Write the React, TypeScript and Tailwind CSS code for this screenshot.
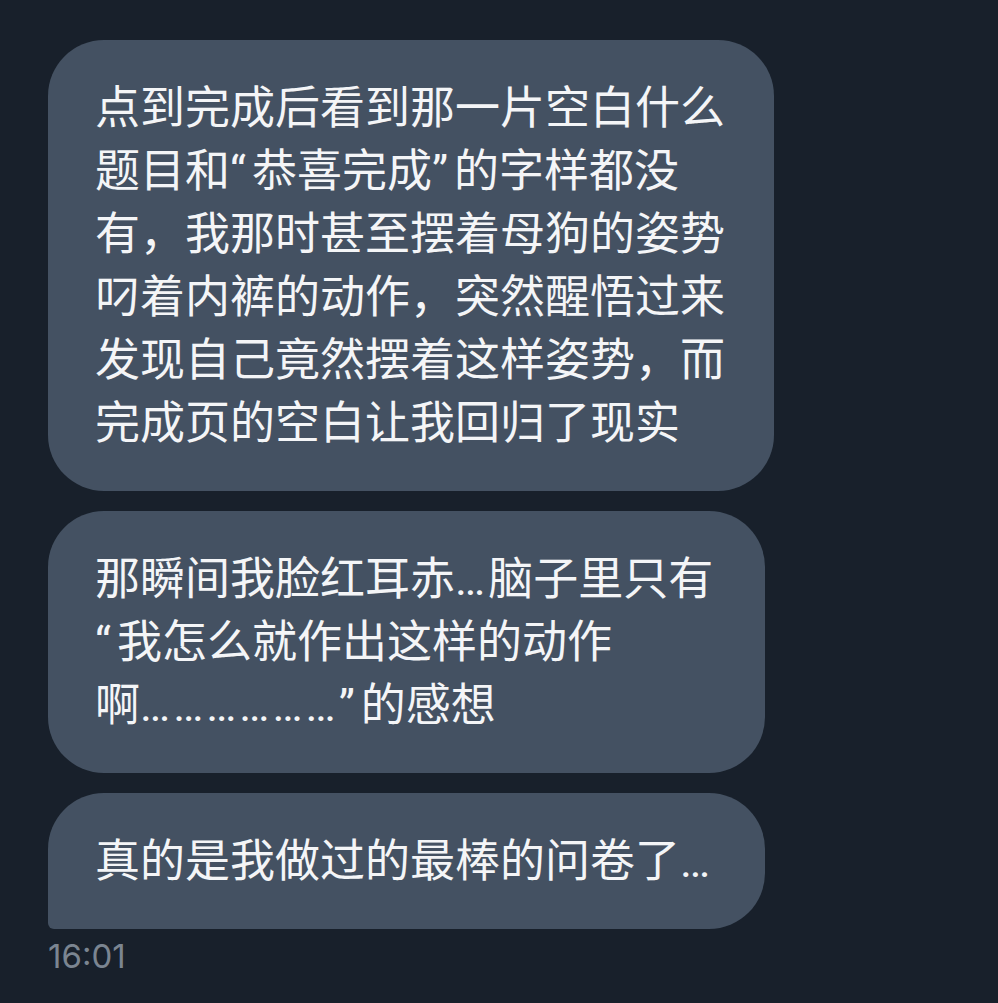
import React from 'react';

// narrow Latin ellipsis and curly quotes, spaced like the phone font
const E = () => <span className="tracking-[3px]">…</span>;
const Q = ({ c }: { c: string }) => <span className="tracking-[6px]">{c}</span>;

const bubbles: { lines: React.ReactNode[]; width: string; corner: string }[] = [
  {
    lines: [
      '点到完成后看到那一片空白什么',
      <>题目和<Q c="“" />恭喜完成<Q c="”" />的字样都没</>,
      '有，我那时甚至摆着母狗的姿势',
      '叼着内裤的动作，突然醒悟过来',
      '发现自己竟然摆着这样姿势，而',
      '完成页的空白让我回归了现实',
    ],
    width: 'w-[726px]',
    corner: 'rounded-[56px]',
  },
  {
    lines: [
      <>那瞬间我脸红耳赤<E />脑子里只有</>,
      <><Q c="“" />我怎么就作出这样的动作</>,
      <>啊<E /><E /><E /><E /><E /><E /><Q c="”" />的感想</>,
    ],
    width: 'w-[717px]',
    corner: 'rounded-[56px]',
  },
  {
    lines: [<>真的是我做过的最棒的问卷了<E /></>],
    width: 'w-[717px]',
    corner: 'rounded-[56px] rounded-bl-[6px]',
  },
];

export default function App() {
  return (
    <div
      lang="zh-CN"
      className="min-h-screen w-full bg-[#18202b] pt-[40px] pl-[48px]"
      style={{ fontFamily: 'Inter, "Noto Sans CJK SC", sans-serif' }}
    >
      <div className="flex flex-col gap-[20px]">
        {bubbles.map((b, i) => (
          <div
            key={i}
            className={`${b.width} ${b.corner} bg-[#445162] px-[47px] py-[36.5px] text-[45px] leading-[63px] text-[#f4f5f7]`}
            style={{ fontFamily: 'Roboto, "Noto Sans CJK SC", sans-serif' }}
          >
            {b.lines.map((l, j) => (
              <div key={j} className="whitespace-nowrap">
                {l}
              </div>
            ))}
          </div>
        ))}
      </div>
      <div className="mt-[8px] text-[33px] leading-[38px] text-[#7b8591]">16:01</div>
    </div>
  );
}
